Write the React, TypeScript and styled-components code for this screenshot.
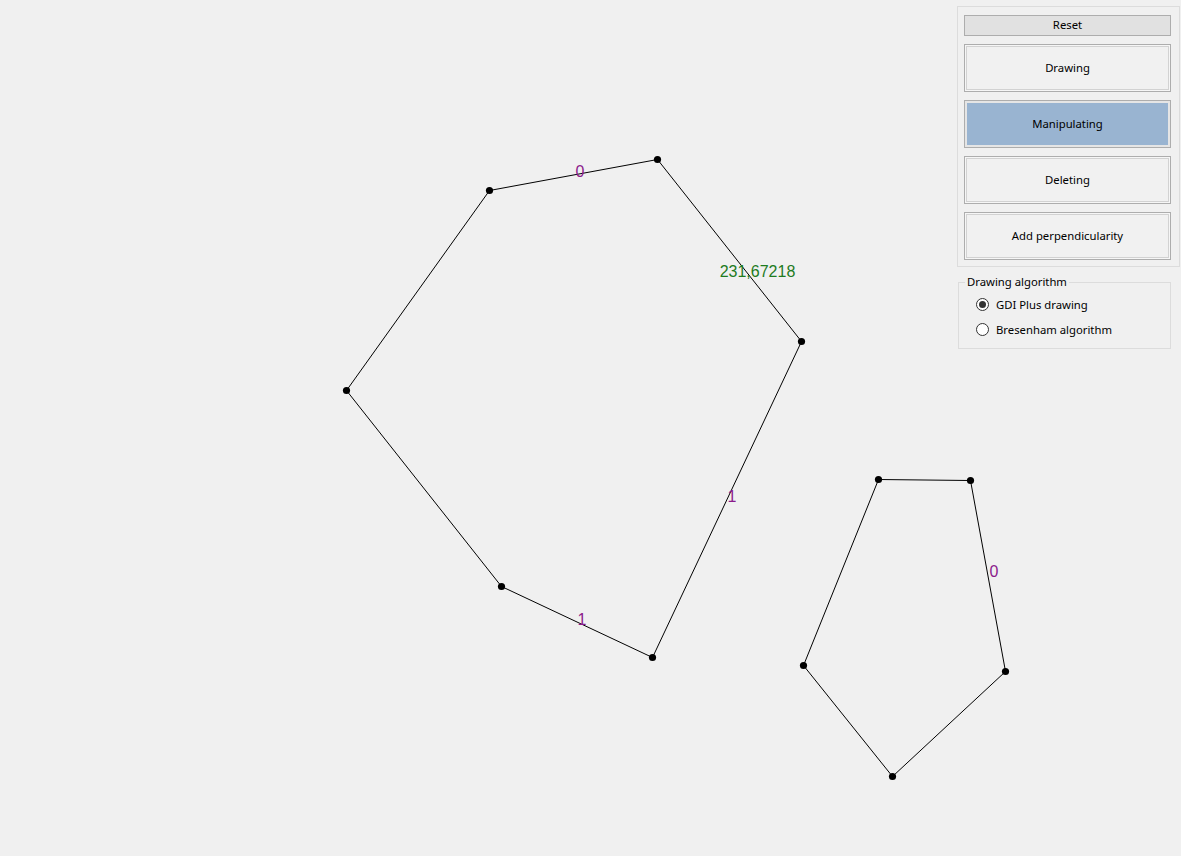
import React, { useState } from "react";
import styled, { createGlobalStyle, css } from "styled-components";

const GlobalStyle = createGlobalStyle`
  html, body {
    margin: 0;
    padding: 0;
    background: #f0f0f0;
    overflow: hidden;
  }
`;

const Window = styled.div`
  display: grid;
  grid-template-areas: "stack";
  width: 1181px;
  height: 856px;
  background: #f0f0f0;
  font-family: "Noto Sans", "Liberation Sans", sans-serif;
  font-size: 11.3px;
  color: #000;
`;

const Canvas = styled.svg`
  grid-area: stack;
  display: block;
`;

const Sidebar = styled.div`
  grid-area: stack;
  justify-self: end;
  align-self: start;
  display: flex;
  flex-direction: column;
  width: 223px;
  padding: 6px 1px 0 0;
`;

const ModePanel = styled.div`
  display: flex;
  flex-direction: column;
  gap: 8px;
  padding: 8px 8px 6px 6px;
  border: 1px solid #dcdcdc;
`;

const ResetButton = styled.button`
  height: 21px;
  margin: 0;
  padding: 0 0 2px 0;
  border: 1px solid #adadad;
  background: #e1e1e1;
  font: inherit;
  color: #000;
`;

const ModeButton = styled.button<{ $active?: boolean }>`
  height: 48px;
  margin: 0;
  padding: 0 0 2px 0;
  border: 1px solid #adadad;
  font: inherit;
  color: #000;
  ${(p) =>
    p.$active
      ? css`
          background: #99b4d1;
          box-shadow: inset 0 0 0 2px #e5e5e5;
        `
      : css`
          background: #f1f1f1;
          box-shadow: inset 0 0 0 1px #f6f6f6, inset 0 0 0 2px #d2d2d2;
        `}
`;

const GroupBox = styled.fieldset`
  width: 213px;
  box-sizing: border-box;
  margin: 8px 0 0 1px;
  padding: 3px 0 6px 0;
  border: 1px solid #dcdcdc;
`;

const Caption = styled.legend`
  margin-left: 6px;
  padding: 0 2px;
  line-height: 14px;
`;

const RadioRow = styled.label`
  display: flex;
  align-items: center;
  gap: 7px;
  height: 25px;
  padding-left: 17px;
`;

const RadioDot = styled.span<{ $checked?: boolean }>`
  position: relative;
  width: 11px;
  height: 11px;
  border: 1px solid #333;
  border-radius: 50%;
  background: #fff;
  ${(p) =>
    p.$checked &&
    css`
      &::after {
        content: "";
        position: absolute;
        left: 2px;
        top: 2px;
        width: 7px;
        height: 7px;
        border-radius: 50%;
        background: #333;
      }
    `}
`;

type Pt = [number, number];
type Label = { x: number; y: number; text: string; color: string };

const polygons: Pt[][] = [
  [
    [489, 190],
    [657, 159],
    [801, 341],
    [652, 657],
    [501, 586],
    [346, 390],
  ],
  [
    [878, 479],
    [970, 480],
    [1005, 671],
    [892, 776],
    [803, 665],
  ],
];

const PURPLE = "#8b1a8b";
const GREEN = "#1e7b1e";

const labels: Label[] = [
  { x: 580, y: 177, text: "0", color: PURPLE },
  { x: 757.5, y: 277, text: "231,67218", color: GREEN },
  { x: 732, y: 502, text: "1", color: PURPLE },
  { x: 582, y: 625, text: "1", color: PURPLE },
  { x: 994, y: 577, text: "0", color: PURPLE },
];

const modes = ["Drawing", "Manipulating", "Deleting", "Add perpendicularity"];

const App = () => {
  const [mode, setMode] = useState("Manipulating");
  const [algo, setAlgo] = useState("gdi");

  return (
    <Window>
      <GlobalStyle />
      <Canvas width={1181} height={856} viewBox="0 0 1181 856">
        <g transform="translate(0.5 0.5)">
          {polygons.map((poly, i) => (
            <g key={i}>
              <polygon
                points={poly.map((p) => p.join(",")).join(" ")}
                fill="none"
                stroke="#000"
                strokeWidth={1}
              />
              {poly.map(([x, y], j) => (
                <circle key={j} cx={x} cy={y} r={3.6} fill="#000" />
              ))}
            </g>
          ))}
        </g>
        {labels.map((l, i) => (
          <text
            key={i}
            x={l.x}
            y={l.y}
            fill={l.color}
            textAnchor="middle"
            fontFamily='"Liberation Sans", Arial, sans-serif'
            fontSize={16}
          >
            {l.text}
          </text>
        ))}
      </Canvas>

      <Sidebar>
        <ModePanel>
          <ResetButton>Reset</ResetButton>
          {modes.map((m) => (
            <ModeButton key={m} $active={m === mode} onClick={() => setMode(m)}>
              {m}
            </ModeButton>
          ))}
        </ModePanel>

        <GroupBox>
          <Caption>Drawing algorithm</Caption>
          <RadioRow onClick={() => setAlgo("gdi")}>
            <RadioDot $checked={algo === "gdi"} />
            GDI Plus drawing
          </RadioRow>
          <RadioRow onClick={() => setAlgo("bresenham")}>
            <RadioDot $checked={algo === "bresenham"} />
            Bresenham algorithm
          </RadioRow>
        </GroupBox>
      </Sidebar>
    </Window>
  );
};

export default App;
